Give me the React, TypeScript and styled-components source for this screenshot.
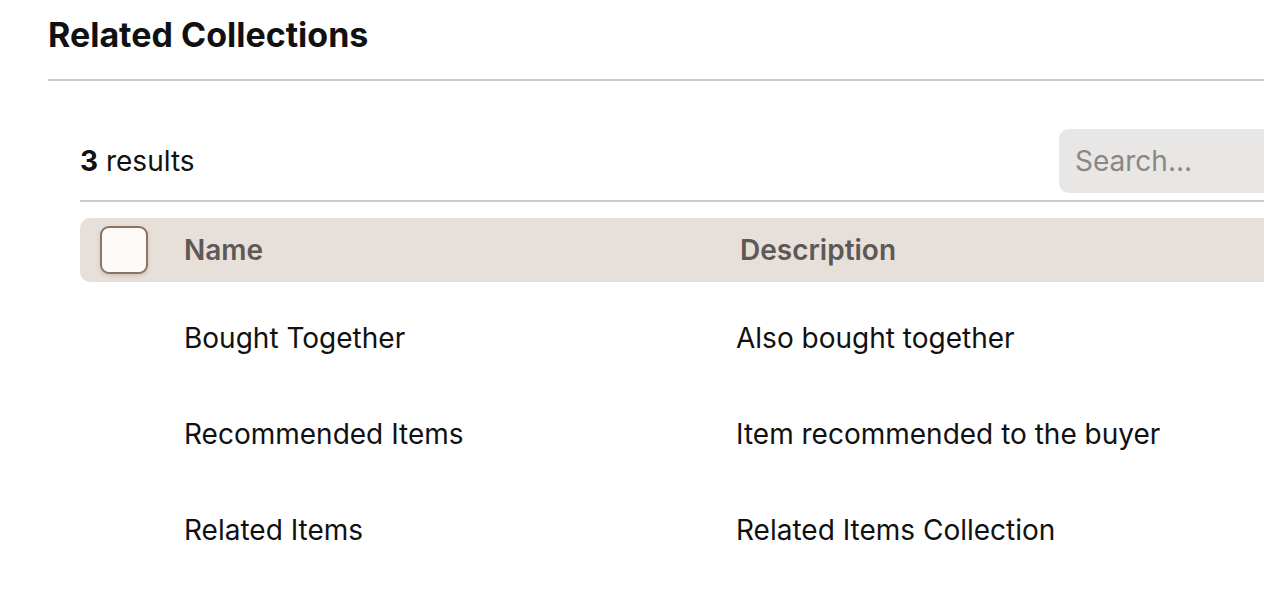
import React from "react";
import styled, { createGlobalStyle } from "styled-components";

const Global = createGlobalStyle`
  html, body { margin: 0; padding: 0; background: #fff; overflow: hidden; }
  body { font-family: Inter, "Noto Sans", sans-serif; color: #111; }
`;

const Page = styled.div`
  width: 1500px;
  padding: 13px 0 0 48px;
  box-sizing: border-box;
`;

const Title = styled.h1`
  margin: 0;
  font-size: 34px;
  line-height: 44px;
  font-weight: 700;
  color: #111;
`;

const Rule = styled.hr<{ $mt: number }>`
  margin: ${(p) => p.$mt}px 0 0 0;
  border: none;
  height: 2px;
  background: #cbcbcb;
`;

const Section = styled.div`
  padding: 48px 0 0 32px;
`;

const Toolbar = styled.div`
  display: flex;
  align-items: center;
  justify-content: space-between;
  height: 64px;
`;

const Count = styled.div`
  font-size: 28px;
  b { font-weight: 700; }
`;

const Search = styled.input`
  width: 420px;
  height: 64px;
  box-sizing: border-box;
  border: none;
  border-radius: 10px;
  background: #e8e7e5;
  padding: 0 16px;
  font-family: Inter, sans-serif;
  font-size: 28px;
  margin-right: 21px;
  outline: none;
  &::placeholder { color: #8a8886; }
`;

const Table = styled.div`
  margin-top: 16px;
`;

const HeadRow = styled.div`
  display: grid;
  grid-template-columns: 104px 552px 1fr;
  align-items: center;
  height: 64px;
  background: #e7dfda;
  border-radius: 10px;
  margin-bottom: 8px;
`;

const HeadCell = styled.div<{ $pl?: number }>`
  font-size: 28px;
  font-weight: 600;
  color: #5e5955;
  padding-left: ${(p) => p.$pl ?? 0}px;
`;

const CheckCell = styled.div`
  padding-left: 20px;
  display: flex;
  align-items: center;
`;

const Checkbox = styled.span`
  display: inline-block;
  width: 48px;
  height: 48px;
  box-sizing: border-box;
  border: 2px solid #8e7360;
  border-radius: 9px;
  background: #fcfaf8;
  box-shadow: 0 2px 4px rgba(0, 0, 0, 0.12);
`;

const Row = styled.div`
  display: grid;
  grid-template-columns: 104px 552px 1fr;
  align-items: center;
  height: 96px;
`;

const Cell = styled.div`
  font-size: 28px;
  color: #111;
`;

const rows = [
  { name: "Bought Together", desc: "Also bought together" },
  { name: "Recommended Items", desc: "Item recommended to the buyer" },
  { name: "Related Items", desc: "Related Items Collection" },
];

export default function App() {
  return (
    <>
      <Global />
      <Page>
        <Title>Related Collections</Title>
        <Rule $mt={22} />
        <Section>
          <Toolbar>
            <Count>
              <b>3</b> results
            </Count>
            <Search placeholder="Search..." />
          </Toolbar>
          <Rule $mt={7} />
          <Table>
            <HeadRow>
              <CheckCell>
                <Checkbox />
              </CheckCell>
              <HeadCell>Name</HeadCell>
              <HeadCell $pl={4}>Description</HeadCell>
            </HeadRow>
            {rows.map((r) => (
              <Row key={r.name}>
                <div />
                <Cell>{r.name}</Cell>
                <Cell>{r.desc}</Cell>
              </Row>
            ))}
          </Table>
        </Section>
      </Page>
    </>
  );
}
